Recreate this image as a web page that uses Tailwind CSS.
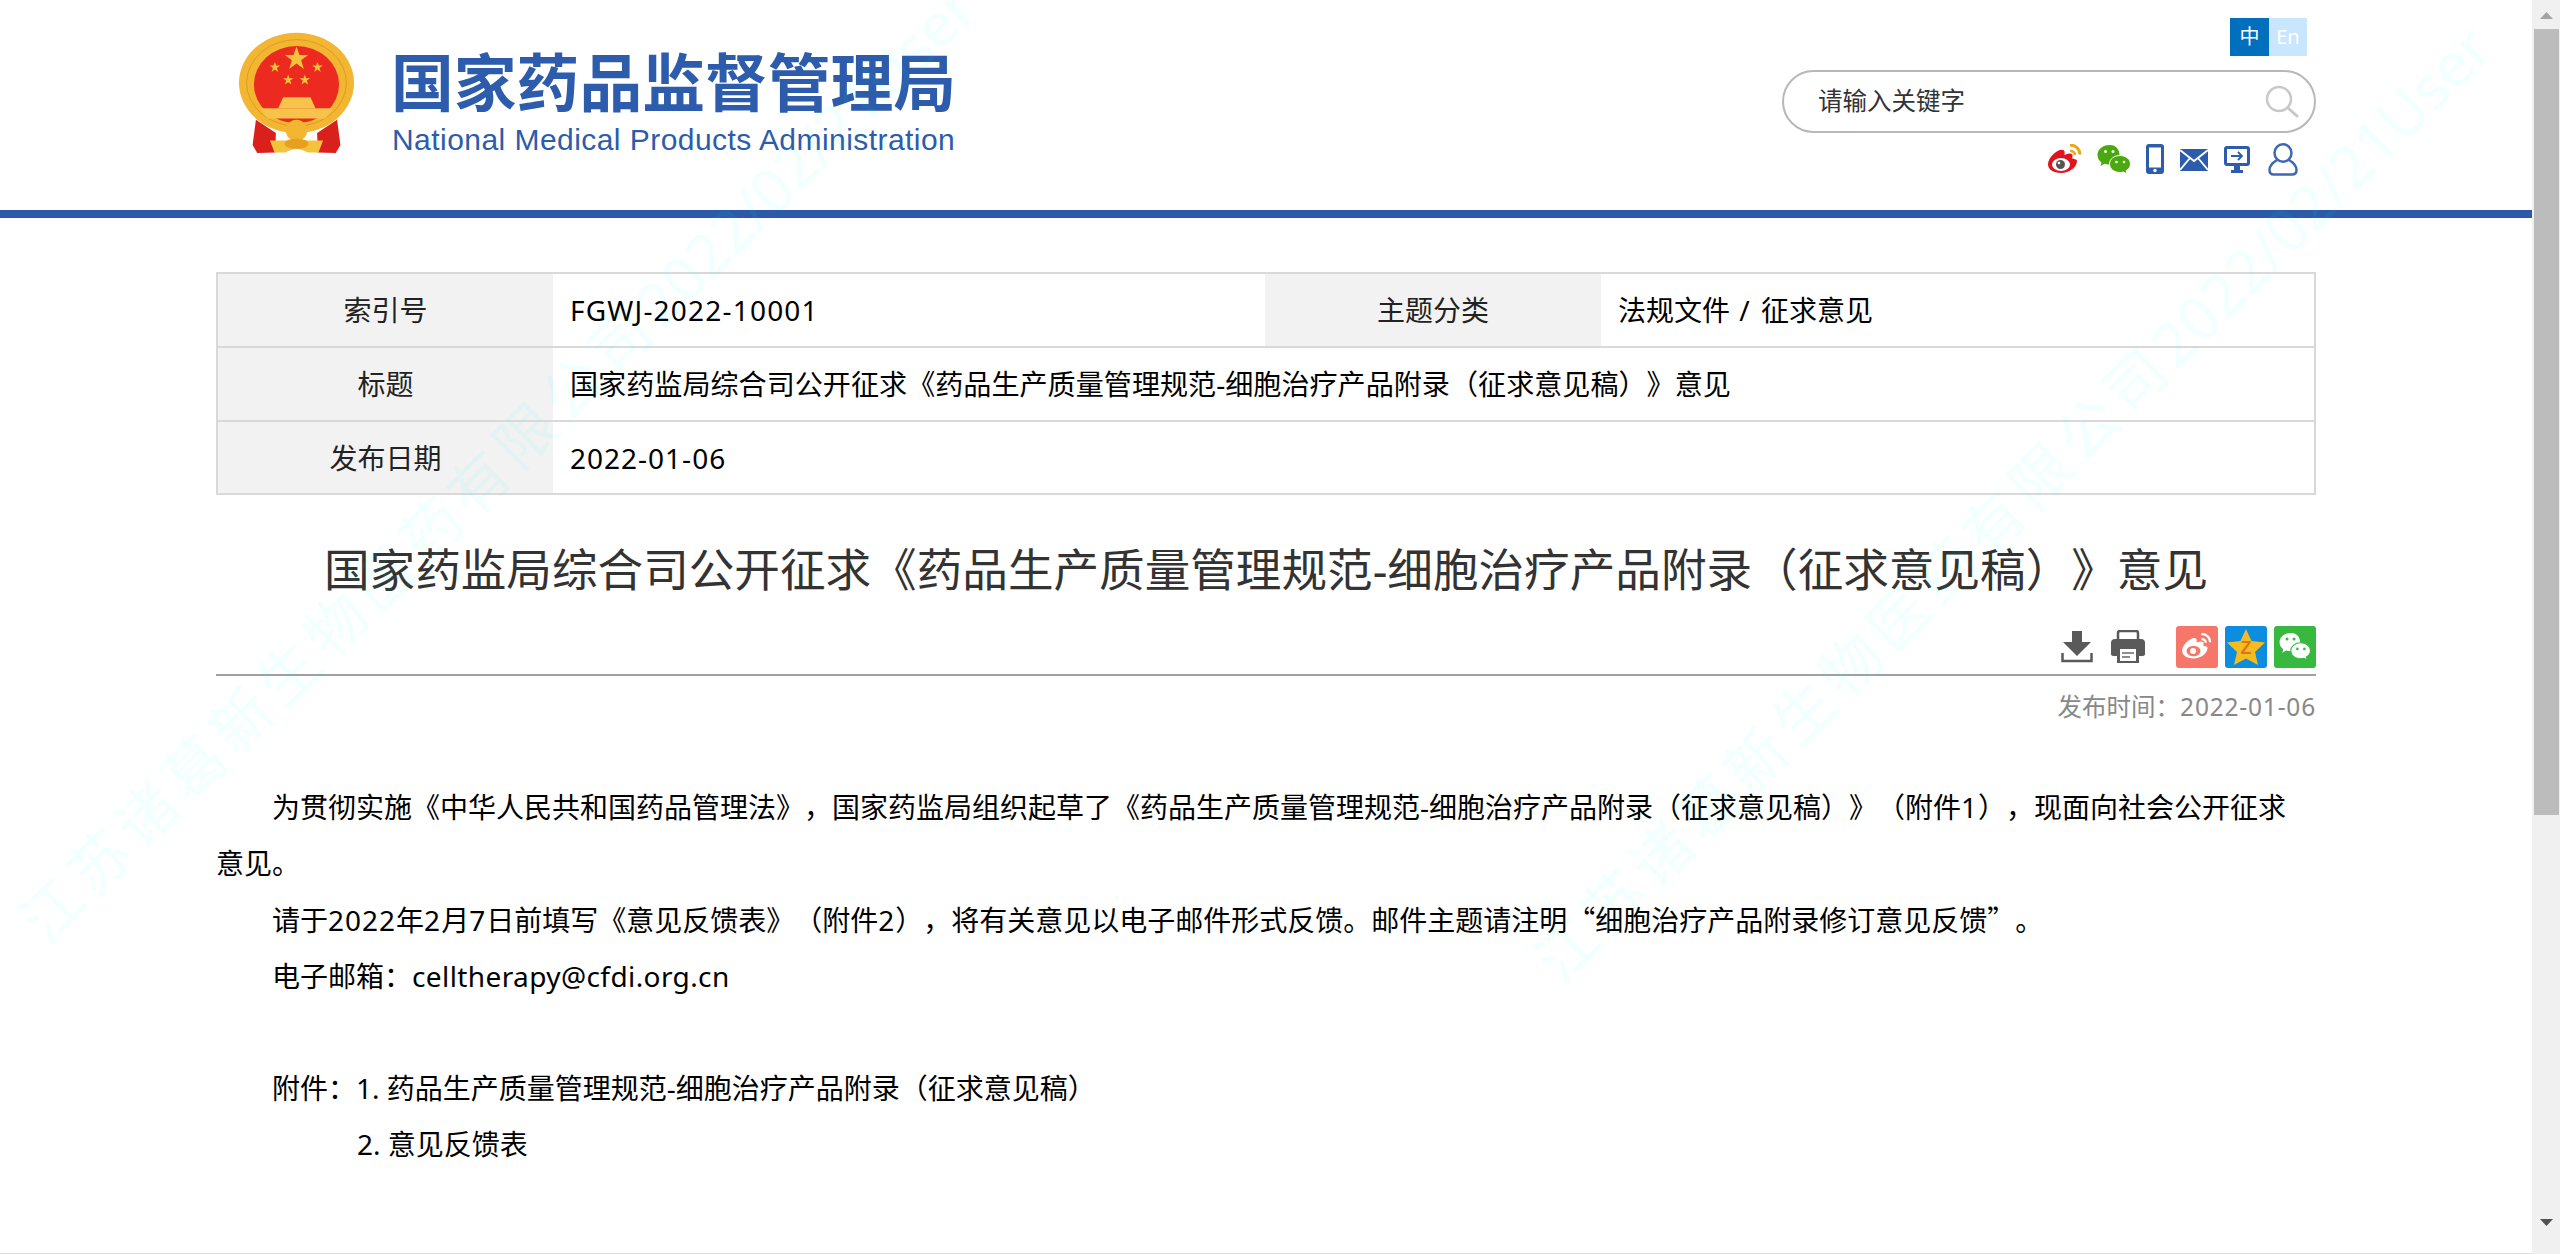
<!DOCTYPE html>
<html lang="zh-CN">
<head>
    <meta charset="UTF-8">
    <title>国家药监局综合司公开征求《药品生产质量管理规范-细胞治疗产品附录（征求意见稿）》意见</title>
    <script src="https://cdn.jsdelivr.net/npm/@tailwindcss/browser@4"></script>
</head>
<body class="bg-white font-['Noto_Sans','Noto_Sans_CJK_SC',sans-serif] text-[28px] text-black overflow-hidden [text-spacing-trim:space-all]">
<div class="relative flex h-[1254px] w-[2560px] overflow-hidden">

    <!-- page -->
    <div class="w-[2532px] shrink-0 flex flex-col">
        <!-- header -->
        <header class="h-[210px] flex justify-between pl-[220px] pr-[216px]">
            <div class="flex pt-[20px]">
                <svg width="153" height="153" viewBox="0 0 460 460">
                    <path d="M108 300 L168 340 L166 398 L112 400 L98 376 Z" fill="#d9201c"/>
                    <path d="M352 300 L292 340 L294 398 L348 400 L362 376 Z" fill="#d9201c"/>
                    <ellipse cx="230" cy="189" rx="173" ry="151" fill="#f2b632"/>
                    <ellipse cx="230" cy="189" rx="150" ry="130" fill="none" stroke="#e09a1e" stroke-width="3"/>
                    <ellipse cx="230" cy="194" rx="128" ry="116" fill="#ec2a1f"/>
                    <path d="M120 265 H340 Q330 285 316 296 H144 Q130 285 120 265 Z" fill="#f7c34a"/>
                    <path d="M175 265 L190 232 H272 L287 265 Z" fill="#f7c34a"/>
                    <polygon fill="#f5c23c" points="230,80 239,105 265,105 244,121 252,147 230,131 208,147 216,121 195,105 221,105"/>
                    <polygon fill="#f5c23c" points="165,126 169,137 181,137 171,144 175,156 165,149 155,156 159,144 149,137 161,137"/>
                    <polygon fill="#f5c23c" points="293,126 297,137 309,137 299,144 303,156 293,149 283,156 287,144 277,137 289,137"/>
                    <polygon fill="#f5c23c" points="205,164 209,175 221,175 211,182 215,194 205,187 195,194 199,182 189,175 201,175"/>
                    <polygon fill="#f5c23c" points="255,164 259,175 271,175 261,182 265,194 255,187 245,194 249,182 239,175 251,175"/>
                    <path d="M150 362 H310 L296 398 H265 L230 384 L195 398 H164 Z" fill="#f5c23c"/>
                    <circle cx="230" cy="332" r="32" fill="#f2b632"/>
                    <ellipse cx="230" cy="372" rx="36" ry="16" fill="#e8a020"/>
                </svg>
                <div class="ml-[18px] pt-[28px] flex flex-col">
                    <div class="text-[62.8px] leading-[68px] font-bold text-[#2c5cab] whitespace-nowrap">国家药品监督管理局</div>
                    <div class="ml-px mt-[6px] font-['Liberation_Sans',sans-serif] text-[30px] tracking-[0.45px] leading-[36px] text-[#2c5cab] whitespace-nowrap">National Medical Products Administration</div>
                </div>
            </div>
            <div class="flex flex-col items-end pt-[18px]">
                <div class="flex h-[38px] mr-[9px] text-[20px] leading-[38px] text-white text-center">
                    <span class="w-[39px] bg-[#006fbe]">中</span>
                    <span class="w-[38px] bg-[#c9e6ff]">En</span>
                </div>
                <div class="relative mt-[14px] w-[534px] h-[63px] rounded-full border-2 border-[#b8b8b8] flex items-center pl-[34px]">
                    <span class="text-[24.5px] text-[#333]">请输入关键字</span>
                    <svg class="absolute right-[14px] top-[12px]" width="36" height="36" viewBox="0 0 36 36" fill="none" stroke="#c8c8c8">
                        <circle cx="15" cy="15" r="12" stroke-width="2.5"/>
                        <path d="M23 23 L34 33" stroke-width="3"/>
                    </svg>
                </div>
                <div class="mt-[11px] flex items-start h-[34px] mr-[18px]">
                    <!-- weibo -->
                    <svg width="36" height="32" viewBox="0 0 36 32">
                        <path d="M30 17c0 6-7.500 12-16 12C6 29 1 25.500 1 20c0-3 2-6.500 5-9.500 4-4 9-6 11-4 .8.800 .9 2.200.4 3.800-.3.800.8.400.8.400 3.300-1.400 6-1.500 7-.1.600.800.500 1.900 0 3.200-.2.600.1.700.5.800 2.300.6 4.300 1 4.300 2.400z" fill="#e0141c"/>
                        <ellipse cx="14" cy="20.500" rx="9" ry="6.500" fill="#fff"/>
                        <circle cx="13.500" cy="20.500" r="4.500" fill="#555"/>
                        <circle cx="12" cy="19" r="1.300" fill="#fff"/>
                        <path d="M23 1.500c5-1 10 3.500 10 9" stroke="#eaa71c" stroke-width="3" fill="none"/>
                        <path d="M23 7c2.500-.5 5 1.500 5 4" stroke="#eaa71c" stroke-width="2.500" fill="none"/>
                    </svg>
                    <!-- wechat -->
                    <svg class="ml-[14px]" width="34" height="32" viewBox="0 0 34 32">
                        <path d="M12.500 1C5.500 1 .5 5.500.5 11c0 3 1.500 5.600 4 7.400L3.500 22l4-2.200c1.500.4 3 .7 5 .7 7 0 10-4.500 10-9.500S19.500 1 12.500 1z" fill="#4aa90f"/>
                        <path d="M23 11.500c-6 0-10.500 3.700-10.500 8.500s4.500 8.500 10.500 8.500c1.300 0 2.600-.2 3.700-.5l3.300 2-.8-3.400c2.800-1.500 4.300-3.900 4.300-6.600 0-4.800-4.500-8.500-10.500-8.500z" fill="#4aa90f" stroke="#fff" stroke-width="1"/>
                        <circle cx="8.500" cy="7.500" r="1.500" fill="#fff"/><circle cx="16" cy="7.500" r="1.500" fill="#fff"/>
                        <circle cx="19.500" cy="18" r="1.300" fill="#fff"/><circle cx="27" cy="18" r="1.300" fill="#fff"/>
                    </svg>
                    <!-- phone -->
                    <svg class="ml-[15px]" width="18" height="30" viewBox="0 0 18 30">
                        <rect width="18" height="30" rx="3" fill="#2c5cab"/>
                        <rect x="3" y="3.500" width="12" height="20" fill="#fff"/>
                        <circle cx="9" cy="26.500" r="1.700" fill="#fff"/>
                    </svg>
                    <!-- mail -->
                    <svg class="ml-[16px] mt-[5px]" width="28" height="22" viewBox="0 0 28 22">
                        <rect width="28" height="22" fill="#2c5cab"/>
                        <path d="M0 1 L14 12 L28 1 M0 21 L10 9 M28 21 L18 9" stroke="#fff" stroke-width="1.800" fill="none"/>
                    </svg>
                    <!-- monitor -->
                    <svg class="ml-[16px] mt-[2px]" width="26" height="28" viewBox="0 0 26 28">
                        <rect width="26" height="20" rx="3" fill="#2c5cab"/>
                        <rect x="3" y="3" width="20" height="14" fill="#fff"/>
                        <path d="M7 10 H18 M14 6 L18 10 L14 14" stroke="#2c5cab" stroke-width="1.800" fill="none"/>
                        <path d="M10 20 H16 V24 H19 V27 H7 V24 H10 Z" fill="#2c5cab"/>
                    </svg>
                    <!-- user -->
                    <svg class="ml-[18px] -mt-[1px]" width="30" height="33" viewBox="0 0 30 33" fill="none" stroke="#3f68b4" stroke-width="2.500">
                        <ellipse cx="15" cy="10" rx="8.500" ry="8.700"/>
                        <path d="M9 17 C4 20 1.500 23 1.500 27 C1.500 30 3 31.500 6 31.500 H24 C27 31.500 28.500 30 28.500 27 C28.500 23 26 20 21 17"/>
                    </svg>
                </div>
            </div>
        </header>
        <div class="h-[8px] bg-[#2c5aa9]"></div>

        <!-- article -->
        <main class="ml-[216px] w-[2100px]">
            <div class="mt-[54px] border-2 border-[#d9d9d9] grid grid-cols-[335px_712px_336px_1fr] grid-rows-[72px_2px_72px_2px_71px] text-[#000]">
                <div class="bg-[#f2f2f2] flex items-center justify-center text-[#222]">索引号</div>
                <div class="flex items-center pl-[17px] tracking-[1.2px]">FGWJ-2022-10001</div>
                <div class="bg-[#f2f2f2] flex items-center justify-center text-[#222]">主题分类</div>
                <div class="flex items-center pl-[17px] whitespace-pre">法规文件<span class="tracking-[2px]"> / </span>征求意见</div>

                <div class="col-span-4 bg-[#d9d9d9]"></div>

                <div class="bg-[#f2f2f2] flex items-center justify-center text-[#222]">标题</div>
                <div class="col-span-3 flex items-center pl-[17px] text-[28.1px]">国家药监局综合司公开征求《药品生产质量管理规范-细胞治疗产品附录（征求意见稿）》意见</div>

                <div class="col-span-4 bg-[#d9d9d9]"></div>

                <div class="bg-[#f2f2f2] flex items-center justify-center text-[#222]">发布日期</div>
                <div class="col-span-3 flex items-center pl-[17px] tracking-[1px]">2022-01-06</div>
            </div>

            <h1 class="mt-[39px] text-center text-[45.6px] leading-[70px] text-[#333] font-normal whitespace-nowrap">国家药监局综合司公开征求《药品生产质量管理规范-细胞治疗产品附录（征求意见稿）》意见</h1>

            <div class="mt-[22px] flex justify-end items-center h-[42px]">
                <!-- download -->
                <svg width="32" height="32" viewBox="0 0 32 32" fill="#5a5a5a">
                    <path d="M11 0 H21 V11 H30 L16 25 L2 11 H11 Z"/>
                    <path d="M1.500 22 V30 H30.500 V22" fill="none" stroke="#5a5a5a" stroke-width="2.500"/>
                </svg>
                <!-- print -->
                <svg class="ml-[18px]" width="34" height="34" viewBox="0 0 34 34">
                    <path d="M7 9 V3 Q7 1 9 1 H25 Q27 1 27 3 V9" fill="none" stroke="#5a5a5a" stroke-width="2.500"/>
                    <path d="M4 9 H30 Q34 9 34 13 V24 Q34 26 31 26 H28 V33 H6 V26 H3 Q0 26 0 24 V13 Q0 9 4 9 Z" fill="#5a5a5a"/>
                    <rect x="9" y="19" width="16" height="12" fill="#fff"/>
                    <path d="M11 23 H23 M11 27 H19" stroke="#8c8c8c" stroke-width="2"/>
                </svg>
                <!-- weibo share -->
                <div class="ml-[31px] w-[42px] h-[42px] rounded-[3px] bg-[#f6776a] flex items-center justify-center">
                    <svg width="32" height="28" viewBox="0 0 36 32">
                        <path d="M30 17c0 6-7.500 12-16 12C6 29 1 25.500 1 20c0-3 2-6.500 5-9.500 4-4 9-6 11-4 .8.800 .9 2.200.4 3.800-.3.800.8.400.8.400 3.300-1.400 6-1.500 7-.1.600.800.500 1.900 0 3.200-.2.600.1.700.5.800 2.300.6 4.300 1 4.300 2.400z" fill="#fff"/>
                        <ellipse cx="14" cy="20.500" rx="8" ry="6" fill="#f6776a"/>
                        <circle cx="13.500" cy="20.500" r="3.500" fill="#fff"/>
                        <path d="M23 1.500c5-1 10 3.500 10 9" stroke="#fff" stroke-width="2.500" fill="none"/>
                        <path d="M23 7c2.500-.5 5 1.500 5 4" stroke="#fff" stroke-width="2.500" fill="none"/>
                    </svg>
                </div>
                <!-- qzone share -->
                <div class="ml-[7px] w-[42px] h-[42px] rounded-[3px] bg-[#0c8de0] flex items-center justify-center">
                    <svg width="38" height="36" viewBox="0 0 38 36">
                        <polygon points="19,0 24.500,12 38,13.500 28,23 31,36 19,29.500 7,36 10,23 0,13.500 13.500,12" fill="#f6bb1c"/>
                        <text x="19" y="25" text-anchor="middle" font-size="18" font-weight="700" font-family="Liberation Sans" fill="#d9761c">Z</text>
                    </svg>
                </div>
                <!-- wechat share -->
                <div class="ml-[7px] w-[42px] h-[42px] rounded-[3px] bg-[#37b83f] flex items-center justify-center">
                    <svg width="34" height="30" viewBox="0 0 34 32">
                        <path d="M12.500 1C5.500 1 .5 5.500.5 11c0 3 1.500 5.600 4 7.400L3.500 22l4-2.200c1.500.4 3 .7 5 .7 7 0 10-4.500 10-9.500S19.500 1 12.500 1z" fill="#fff"/>
                        <path d="M23 11.500c-6 0-10.500 3.700-10.500 8.500s4.500 8.500 10.500 8.500c1.300 0 2.600-.2 3.700-.5l3.300 2-.8-3.400c2.800-1.500 4.300-3.900 4.300-6.600 0-4.800-4.500-8.500-10.500-8.500z" fill="#fff" stroke="#37b83f" stroke-width="1.200"/>
                        <circle cx="8.500" cy="7.500" r="1.600" fill="#37b83f"/><circle cx="16" cy="7.500" r="1.600" fill="#37b83f"/>
                        <circle cx="19.500" cy="18" r="1.400" fill="#37b83f"/><circle cx="27" cy="18" r="1.400" fill="#37b83f"/>
                    </svg>
                </div>
            </div>

            <div class="mt-[6px] h-[2px] bg-[#a0a0a0]"></div>
            <div class="mt-[11px] text-right text-[24.5px] leading-[40px] text-[#888]">发布时间：<span class="tracking-[0.8px]">2022-01-06</span></div>

            <div class="mt-[52px] leading-[56px]">
                <p class="indent-[56px] pr-[6px]">为贯彻实施《中华人民共和国药品管理法》，国家药监局组织起草了《药品生产质量管理规范-细胞治疗产品附录（征求意见稿）》（附件<span class="tracking-[1px]">1</span>），现面向社会公开征求意见。</p>
                <p class="indent-[56px]">请于<span class="tracking-[1px]">2022</span>年<span class="tracking-[1px]">2</span>月<span class="tracking-[1px]">7</span>日前填写《意见反馈表》（附件<span class="tracking-[1px]">2</span>），将有关意见以电子邮件形式反馈。邮件主题请注明<span class="font-['Noto_Sans_CJK_SC',sans-serif]">“细胞治疗产品附录修订意见反馈”</span>。</p>
                <p class="indent-[56px]">电子邮箱：<span class="tracking-[0.4px]">celltherapy@cfdi.org.cn</span></p>
                <p class="h-[56px]"></p>
                <p class="indent-[56px]">附件：1. 药品生产质量管理规范-细胞治疗产品附录（征求意见稿）</p>
                <p class="pl-[141px]">2. 意见反馈表</p>
            </div>
        </main>
    </div>

    <!-- scrollbar -->
    <aside class="w-[28px] h-full bg-[#f0f0f0] flex flex-col items-center">
        <svg class="mt-[12px]" width="13" height="7" viewBox="0 0 13 7"><polygon points="6.500,0 13,7 0,7" fill="#a3a3a3"/></svg>
        <div class="mt-[10px] w-[25px] h-[786px] bg-[#bcbcbc]"></div>
        <svg class="mt-[404px]" width="13" height="7" viewBox="0 0 13 7"><polygon points="0,0 13,0 6.500,7" fill="#505050"/></svg>
    </aside>

    <!-- horizontal scrollbar edge -->
    <div class="absolute left-0 bottom-0 w-[2532px] h-[1px] bg-[#dcdcdc]"></div>

    <!-- watermark -->
    <div class="absolute left-[30px] top-[900px] origin-left -rotate-[45deg] text-[60px] leading-[60px] text-[#00ffff]/6 whitespace-nowrap pointer-events-none"><span class="tracking-[7px]">江苏诸葛新生物医药有限公司</span>2022/02/21User</div>
    <div class="absolute left-[1545px] top-[940px] origin-left -rotate-[45deg] text-[60px] leading-[60px] text-[#00ffff]/6 whitespace-nowrap pointer-events-none"><span class="tracking-[7px]">江苏诸葛新生物医药有限公司</span>2022/02/21User</div>
</div>
</body>
</html>
